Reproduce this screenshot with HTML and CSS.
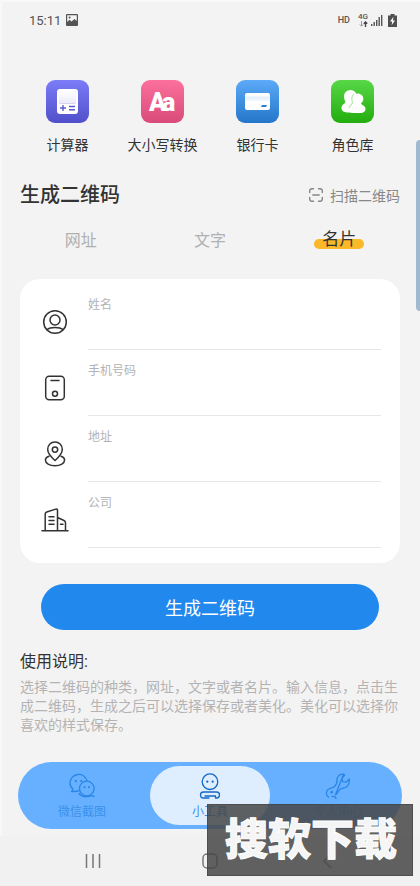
FILE: index.html
```html
<!DOCTYPE html>
<html lang="zh-CN">
<head>
<meta charset="utf-8">
<meta name="viewport" content="width=device-width, initial-scale=1">
<title>生成二维码</title>
<link rel="stylesheet" href="styles.css">
</head>
<body>
<header class="status">
  <div class="status-group">
    <span class="clock">15:11</span>
    <svg width="12" height="12" viewBox="0 0 12 12"><path d="M1 0h10a1 1 0 0 1 1 1v10a1 1 0 0 1-1 1H1a1 1 0 0 1-1-1V1a1 1 0 0 1 1-1zM1.200 1.200V8L3.500 5.800 5.500 7.500 8.500 5 10.800 7V1.200z" fill="#555" fill-rule="evenodd"/><circle cx="3.600" cy="3.500" r="1" fill="#555"/></svg>
  </div>
  <div class="status-group status-right">
    <span class="hd">HD</span>
    <span class="network"><span class="gen">4G</span>
      <svg width="9" height="6" viewBox="0 0 9 6" fill="none"><path d="M2.500 0v5M.8 3.400l1.700 1.800 1.700-1.800" stroke="#999"/><path d="M6.500 6V1M4.800 2.800l1.700-1.900 1.700 1.900" stroke="#444" stroke-width="1.300"/></svg>
    </span>
    <svg width="12" height="12" viewBox="0 0 12 12" fill="#555"><path d="M0 10h1.400v2H0zM2.500 8h1.400v4H2.500zM5 6h1.400v6H5zM7.500 3h1.400v9H7.500zM10 1h1.400v11H10z"/></svg>
    <svg class="battery" width="9" height="13" viewBox="0 0 9 13"><path d="M2.500 0h4v1.500H9V13H0V1.500h2.500z" fill="#505050"/><path d="M5.500 2.700 2 7.600h2.200L3.600 11.300 7 6.400H4.900z" fill="#fff"/></svg>
  </div>
</header>

<main class="content">
  <nav class="tools" aria-label="工具">
    <a class="tool" href="#calc">
      <svg class="tile" viewBox="0 0 43 43"><defs><linearGradient id="violet" x2="0" y2="1"><stop stop-color="#7c7cf8"/><stop offset="1" stop-color="#5050ca"/></linearGradient><linearGradient id="screen" x2="0" y2="1"><stop stop-color="#fff"/><stop offset="1" stop-color="#ececfa"/></linearGradient></defs><rect width="43" height="43" rx="9" fill="url(#violet)"/><rect x="11" y="9" width="21" height="25" rx="3" fill="#fff"/><rect x="13" y="10" width="17" height="13" rx="2" fill="url(#screen)"/><path d="M13 22.500q1 1 2 1h13q1 0 2-1" fill="none" stroke="#c9c9ee" stroke-width=".8"/><path d="M14 28h6M17 25v6M23 26.500h6M23 29.700h6" stroke="#5a5ad5" stroke-width="1.400"/></svg>
      <span>计算器</span>
    </a>
    <a class="tool" href="#case">
      <svg class="tile" viewBox="0 0 43 43"><defs><linearGradient id="pink" x2="0" y2="1"><stop stop-color="#fb709c"/><stop offset="1" stop-color="#d94b79"/></linearGradient></defs><rect width="43" height="43" rx="9" fill="url(#pink)"/><text class="letters" x="8" y="31">A<tspan dx="-4">a</tspan></text></svg>
      <span>大小写转换</span>
    </a>
    <a class="tool" href="#card">
      <svg class="tile" viewBox="0 0 43 43"><defs><linearGradient id="blue" x2="0" y2="1"><stop stop-color="#5caaf8"/><stop offset="1" stop-color="#2476ca"/></linearGradient></defs><rect width="43" height="43" rx="9" fill="url(#blue)"/><rect x="9" y="13" width="25" height="17" rx="2" fill="#fff"/><path d="M9 16h25v5H9z" fill="#e4f0fc"/><path d="M9 16h25M9 20h25" stroke="#f7fbff"/><path d="M26 25h5l-1 2h-5z" fill="#2b7fd4"/></svg>
      <span>银行卡</span>
    </a>
    <a class="tool" href="#roles">
      <svg class="tile" viewBox="0 0 43 43"><defs><linearGradient id="green" x2="0" y2="1"><stop stop-color="#58d747"/><stop offset="1" stop-color="#22ad0d"/></linearGradient></defs><rect width="43" height="43" rx="9" fill="url(#green)"/><path d="M19.500 10c-4 0-6.500 3-6.500 6.500 0 3 1.300 4.300 1.300 5.500 0 1.800-3.800 2-3.800 6 0 3 2.500 4.500 7.500 4.500h7V13c-1.300-2-3.500-3-5.500-3z" fill="#fff"/><path d="M26.500 13.500c-3.700 0-6 2.800-6 5.900 0 2 .8 3.300.8 4.300-1 1.700-4.300 2.200-4.300 5.400 0 2.700 2 3.900 6 3.900h6c4 0 5.500-1.700 5.500-4.200 0-3.300-4-3.600-4.500-5.600 1.400-1.200 2.300-2.300 2.300-4.300 0-3.100-2.200-5.400-5.800-5.400z" fill="#fff"/><path d="M23 14c-2.300 2-2.800 5.200-1.300 9-1.600 1.500-3.200 2.700-3.700 5" fill="none" stroke="#bfe8b9" stroke-width="1.300"/></svg>
      <span>角色库</span>
    </a>
  </nav>

  <div class="heading">
    <h1>生成二维码</h1>
    <a class="scan" href="#scan">
      <svg width="14" height="14" viewBox="0 0 14 14" fill="none" stroke="#888" stroke-width="1.400" stroke-linecap="round"><path d="M.7 4.500V3Q.7.700 3 .7h1.500M9.500.7H11q2.300 0 2.300 2.300v1.500M13.300 9.500V11q0 2.300-2.300 2.300H9.500M4.500 13.300H3Q.7 13.300.7 11V9.500M3.800 7h6.400"/></svg>
      扫描二维码
    </a>
  </div>

  <div class="tabs" role="tablist">
    <button class="tab" role="tab" type="button">网址</button>
    <button class="tab" role="tab" type="button">文字</button>
    <button class="tab" role="tab" type="button" aria-selected="true"><span class="marked">名片</span></button>
  </div>

  <form id="card-form" class="form-card">
    <div class="row">
      <svg class="row-icon" viewBox="0 0 28 28"><circle cx="14" cy="14" r="11.300"/><circle cx="14" cy="12" r="5"/><path d="M6 21.500c3.500-2.800 12.500-2.800 16 0"/></svg>
      <div class="field"><label for="name">姓名</label><input id="name" type="text"></div>
    </div>
    <div class="row">
      <svg class="row-icon" viewBox="0 0 28 28"><rect x="4.700" y="2.200" width="18.600" height="23.600" rx="3.500"/><path d="M10 6.500h8"/><circle cx="14" cy="19.800" r="2.500"/></svg>
      <div class="field"><label for="phone">手机号码</label><input id="phone" type="tel"></div>
    </div>
    <div class="row">
      <svg class="row-icon" viewBox="0 0 28 28"><path d="M14 20.500c-2.500-2.300-7.300-6.500-7.300-11C6.700 5 10 2 14 2s7.300 3 7.300 7.500c0 4.500-4.800 8.700-7.300 11z"/><circle cx="14" cy="9.600" r="2.700"/><path d="M8 16.300c-2.400.7-3.600 2-3.600 3.700 0 3.200 4 5.700 9.600 5.700s9.600-2.500 9.600-5.700c0-1.700-1.200-3-3.600-3.700"/></svg>
      <div class="field"><label for="address">地址</label><input id="address" type="text"></div>
    </div>
    <div class="row">
      <svg class="row-icon" viewBox="0 0 28 28"><path d="M1 24.700h26M4.200 24.500V8q0-1.500 1.500-2l9-2.900q1.800-.5 1.800 1.300v20M16.500 11.500l6 2.700q2 .9 2 2.600v7.700M8 10.800h5M8 14.500h5M8 18.200h5M19.500 18.200h2.500"/></svg>
      <div class="field"><label for="company">公司</label><input id="company" type="text"></div>
    </div>
  </form>

  <button class="submit" type="button">生成二维码</button>

  <section class="help">
    <h2>使用说明:</h2>
    <p>选择二维码的种类，网址，文字或者名片。输入信息，点击生成二维码，生成之后可以选择保存或者美化。美化可以选择你喜欢的样式保存。</p>
  </section>
</main>

<nav class="bottom-nav" aria-label="主导航">
  <a class="nav-item" href="#wechat">
    <svg width="26" height="26" viewBox="0 0 26 26"><path d="M10 17.700c-2.500 1-4.500 1-7.500.6 1-.8 1.400-1.500 1.400-2.300C2 14.500 1 12.500 1 10a8.700 8.700 0 0 1 17-2.500"/><circle cx="17.800" cy="15.500" r="7.300"/><path d="M10 20.500c1.700 2.300 4 3.200 7 3.200 2 0 4-.7 5.500-1 1 0 2 .3 2.500.8"/><path d="M6.800 7.800v.4M12.300 7.800v.4M15.500 14v.3M20 14v.3" stroke-width="2"/></svg>
    <span>微信截图</span>
  </a>
  <a class="nav-item active" href="#tools" aria-current="page">
    <svg width="26" height="26" viewBox="0 0 26 26"><circle cx="13" cy="8.700" r="7.800"/><path d="M10.300 8.500v.2M15.700 8.500v.2" stroke-width="2.200"/><path d="M12 25H6.500Q3.500 25 3.500 22t3-3h13q3 0 3 3T19.500 25H18.500v-2H8"/></svg>
    <span>小工具</span>
  </a>
  <a class="nav-item" href="#me">
    <svg width="26" height="26" viewBox="0 0 26 26"><path d="M18.500 1.200c-4.500-.5-7.300 2.800-6.500 8-.8 2.500-2.200 4.600-4.500 5.400-4 .9-6.400 3.200-6 6.400.2 1.500.9 2.500 2 3.300M7 23.300l2.300.3c1.200.2 1.600.8 1.700 2M10.500 21.800c1.800-.7 2.200-2.600 3.300-4.200.8-1.300 1.900-2.200 3.700-2.300 4.500-.2 7.500-3.800 6.800-9.300L21 9.200l-3.200-.5-1-3.200 2.700-3.200q.3-.9-1-1.100z"/><path d="M6.700 19v.3" stroke-width="2.600"/></svg>
    <span>个人中心</span>
  </a>
</nav>

<footer class="system-bar">
  <button type="button" aria-label="最近任务"><svg width="16" height="16" viewBox="0 0 16 16"><path d="M1.500 1v14M8 1v14M14.500 1v14"/></svg></button>
  <button type="button" aria-label="主屏幕"><svg width="16" height="16" viewBox="0 0 16 16"><rect x="1" y="1" width="14" height="14" rx="4"/></svg></button>
  <button type="button" aria-label="返回"><svg width="16" height="16" viewBox="0 0 16 16"><path d="M12 1 5 8l7 7"/></svg></button>
</footer>

<div class="edge-handle"></div>
<div class="watermark">搜软下载</div>
</body>
</html>
```
FILE: styles.css
```css
* { box-sizing: border-box; }

body {
  margin: 0;
  min-height: 100vh;
  position: relative;
  display: flex;
  flex-direction: column;
  overflow-x: hidden;
  background: #f3f3f3;
  box-shadow: inset 2px 2px #f8f8f8;
  color: #333;
  font-family: Roboto, "Noto Sans CJK SC", sans-serif;
  font-size: 14px;
}

a { color: inherit; text-decoration: none; }
button, input { font: inherit; border: 0; background: none; padding: 0; }
h1, h2, p { margin: 0; }
svg { display: block; flex: none; }

.status {
  display: flex;
  justify-content: space-between;
  align-items: center;
  height: 40px;
  padding: 0 23px 0 29px;
  color: #555;
}
.status-group { display: flex; align-items: center; gap: 5px; }
.status-right { gap: 3px; }
.clock { font-size: 13px; }
.hd { font-size: 9px; font-weight: 500; margin-right: 5px; }
.network { display: flex; flex-direction: column; align-items: center; }
.gen { font-size: 8px; line-height: 8px; font-weight: 500; }
.battery { margin-left: 2px; }

.content { flex: 1; padding: 40px 20px 0; }

.tools { display: grid; grid-template-columns: repeat(4, 1fr); }
.tool {
  display: flex;
  flex-direction: column;
  align-items: center;
  gap: 12px;
  line-height: 20px;
  white-space: nowrap;
}
.tile { width: 43px; height: 43px; }
.letters { fill: #fff; font: 900 25px Roboto, sans-serif; }

.heading {
  display: flex;
  justify-content: space-between;
  align-items: center;
  margin-top: 24px;
  height: 32px;
}
h1 { font-size: 20px; font-weight: 500; line-height: 32px; }
.scan { display: flex; align-items: center; gap: 7px; color: #888; }

.tabs {
  display: grid;
  grid-template-columns: repeat(3, 1fr);
  margin: 12px -4px 0;
}
.tab { height: 32px; color: #b0b0b0; font-size: 16px; }
.tab[aria-selected="true"] { color: #333; font-size: 17px; }
.marked {
  display: inline-block;
  padding: 0 8px;
  line-height: 24px;
  position: relative;
  z-index: 0;
}
.marked::before {
  content: "";
  position: absolute;
  z-index: -1;
  left: 0;
  right: 0;
  bottom: 2px;
  height: 10px;
  border-radius: 5px;
  background: #fbb929;
}

.form-card {
  margin-top: 24px;
  padding: 5px 19px 15px;
  border-radius: 20px;
  background: #fff;
}
.row { display: flex; align-items: center; gap: 19px; height: 66px; }
.row-icon {
  width: 28px;
  height: 28px;
  margin: 10px 0 0 2px;
  fill: none;
  stroke: #333;
  stroke-width: 1.5px;
  stroke-linecap: round;
  stroke-linejoin: round;
}
.field {
  flex: 1;
  display: flex;
  flex-direction: column;
  align-self: stretch;
  padding-top: 11px;
  border-bottom: 1px solid #e6e6e6;
}
.field label { color: #b3b3b3; font-size: 12px; line-height: 20px; }
.field input { flex: 1; min-height: 0; width: 100%; color: #333; outline: 0; }

.submit {
  display: block;
  width: calc(100% - 42px);
  height: 46px;
  margin: 21px auto 0;
  border-radius: 23px;
  background: #2189ee;
  color: #fff;
  font-size: 18px;
}

.help { margin-top: 20px; }
h2 { font-size: 16px; font-weight: 400; line-height: 24px; }
.help p { margin-top: 4px; color: #b3b3b3; line-height: 19px; }

.bottom-nav {
  display: grid;
  grid-template-columns: repeat(3, 1fr);
  margin: 0 18px 7px;
  padding: 4px 0;
  border-radius: 34px;
  background: #66b0ff;
}
.nav-item {
  display: flex;
  flex-direction: column;
  align-items: center;
  gap: 4px;
  height: 59px;
  margin: 0 4px;
  padding-top: 7px;
  border-radius: 30px;
  color: #3c91ea;
  font-size: 12px;
  line-height: 18px;
}
.nav-item svg { fill: none; stroke: #2a86e6; stroke-width: 1.3px; stroke-linecap: round; stroke-linejoin: round; }
.nav-item.active { background: #dfeeff; }
.nav-item.active svg { stroke: #1268c4; }

.system-bar {
  display: grid;
  grid-template-columns: repeat(3, 1fr);
  height: 50px;
  padding: 0 35px;
  background: #f1f1f1;
}
.system-bar button { display: flex; justify-content: center; align-items: center; }
.system-bar svg { fill: none; stroke: #777; stroke-width: 1.5px; }

.edge-handle {
  position: absolute;
  top: 140px;
  right: 0;
  width: 4px;
  height: 171px;
  border-radius: 4px 0 0 4px;
  background: #9fb9d0;
}

.watermark {
  position: absolute;
  right: 7px;
  bottom: 10px;
  padding: 0 15px 0 17px;
  border: 1px solid rgba(60, 60, 60, .5);
  background: rgba(70, 70, 70, .85);
  color: rgba(255, 255, 255, .95);
  font-size: 43px;
  font-weight: 900;
  line-height: 70px;
  -webkit-text-stroke: 1px #fff;
  pointer-events: none;
}
```
